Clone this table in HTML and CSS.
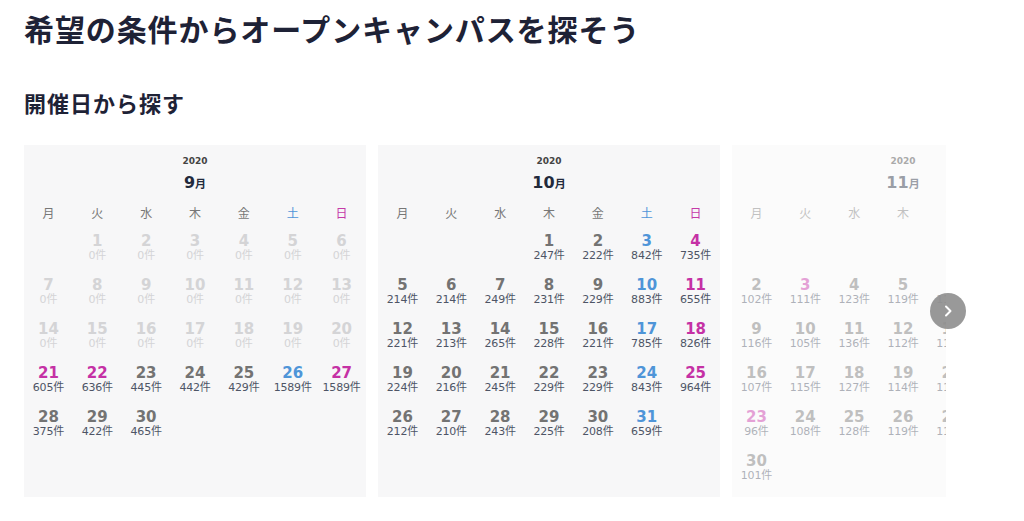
FILE: index.html
```html
<!DOCTYPE html>
<html lang="ja">
<head>
<meta charset="utf-8">
<link rel="stylesheet" href="styles.css">
</head>
<body>
<h1 class="title">希望の条件からオープンキャンパスを探そう</h1>
<h2 class="subtitle">開催日から探す</h2>
<div class="carousel">
  <div class="viewport">
    <div class="track">
      <section class="month">
        <div class="year">2020</div>
        <div class="mname"><span class="mnum">9</span>月</div>
        <div class="weekdays"><span>月</span><span>火</span><span>水</span><span>木</span><span>金</span><span class="sat">土</span><span class="sun">日</span></div>
        <div class="days">
          <div class="day empty"></div>
          <div class="day off"><b>1</b><i>0件</i></div>
          <div class="day off"><b>2</b><i>0件</i></div>
          <div class="day off"><b>3</b><i>0件</i></div>
          <div class="day off"><b>4</b><i>0件</i></div>
          <div class="day off"><b>5</b><i>0件</i></div>
          <div class="day off"><b>6</b><i>0件</i></div>
          <div class="day off"><b>7</b><i>0件</i></div>
          <div class="day off"><b>8</b><i>0件</i></div>
          <div class="day off"><b>9</b><i>0件</i></div>
          <div class="day off"><b>10</b><i>0件</i></div>
          <div class="day off"><b>11</b><i>0件</i></div>
          <div class="day off"><b>12</b><i>0件</i></div>
          <div class="day off"><b>13</b><i>0件</i></div>
          <div class="day off"><b>14</b><i>0件</i></div>
          <div class="day off"><b>15</b><i>0件</i></div>
          <div class="day off"><b>16</b><i>0件</i></div>
          <div class="day off"><b>17</b><i>0件</i></div>
          <div class="day off"><b>18</b><i>0件</i></div>
          <div class="day off"><b>19</b><i>0件</i></div>
          <div class="day off"><b>20</b><i>0件</i></div>
          <div class="day hol"><b>21</b><i>605件</i></div>
          <div class="day hol"><b>22</b><i>636件</i></div>
          <div class="day"><b>23</b><i>445件</i></div>
          <div class="day"><b>24</b><i>442件</i></div>
          <div class="day"><b>25</b><i>429件</i></div>
          <div class="day sat"><b>26</b><i>1589件</i></div>
          <div class="day sun"><b>27</b><i>1589件</i></div>
          <div class="day"><b>28</b><i>375件</i></div>
          <div class="day"><b>29</b><i>422件</i></div>
          <div class="day"><b>30</b><i>465件</i></div>
        </div>
      </section>
      <section class="month">
        <div class="year">2020</div>
        <div class="mname"><span class="mnum">10</span>月</div>
        <div class="weekdays"><span>月</span><span>火</span><span>水</span><span>木</span><span>金</span><span class="sat">土</span><span class="sun">日</span></div>
        <div class="days">
          <div class="day empty"></div>
          <div class="day empty"></div>
          <div class="day empty"></div>
          <div class="day"><b>1</b><i>247件</i></div>
          <div class="day"><b>2</b><i>222件</i></div>
          <div class="day sat"><b>3</b><i>842件</i></div>
          <div class="day sun"><b>4</b><i>735件</i></div>
          <div class="day"><b>5</b><i>214件</i></div>
          <div class="day"><b>6</b><i>214件</i></div>
          <div class="day"><b>7</b><i>249件</i></div>
          <div class="day"><b>8</b><i>231件</i></div>
          <div class="day"><b>9</b><i>229件</i></div>
          <div class="day sat"><b>10</b><i>883件</i></div>
          <div class="day sun"><b>11</b><i>655件</i></div>
          <div class="day"><b>12</b><i>221件</i></div>
          <div class="day"><b>13</b><i>213件</i></div>
          <div class="day"><b>14</b><i>265件</i></div>
          <div class="day"><b>15</b><i>228件</i></div>
          <div class="day"><b>16</b><i>221件</i></div>
          <div class="day sat"><b>17</b><i>785件</i></div>
          <div class="day sun"><b>18</b><i>826件</i></div>
          <div class="day"><b>19</b><i>224件</i></div>
          <div class="day"><b>20</b><i>216件</i></div>
          <div class="day"><b>21</b><i>245件</i></div>
          <div class="day"><b>22</b><i>229件</i></div>
          <div class="day"><b>23</b><i>229件</i></div>
          <div class="day sat"><b>24</b><i>843件</i></div>
          <div class="day sun"><b>25</b><i>964件</i></div>
          <div class="day"><b>26</b><i>212件</i></div>
          <div class="day"><b>27</b><i>210件</i></div>
          <div class="day"><b>28</b><i>243件</i></div>
          <div class="day"><b>29</b><i>225件</i></div>
          <div class="day"><b>30</b><i>208件</i></div>
          <div class="day sat"><b>31</b><i>659件</i></div>
        </div>
      </section>
      <section class="month faded">
        <div class="year">2020</div>
        <div class="mname"><span class="mnum">11</span>月</div>
        <div class="weekdays"><span>月</span><span>火</span><span>水</span><span>木</span><span>金</span><span class="sat">土</span><span class="sun">日</span></div>
        <div class="days">
          <div class="day empty"></div>
          <div class="day empty"></div>
          <div class="day empty"></div>
          <div class="day empty"></div>
          <div class="day empty"></div>
          <div class="day empty"></div>
          <div class="day sun"><b>1</b><i>98件</i></div>
          <div class="day"><b>2</b><i>102件</i></div>
          <div class="day hol"><b>3</b><i>111件</i></div>
          <div class="day"><b>4</b><i>123件</i></div>
          <div class="day"><b>5</b><i>119件</i></div>
          <div class="day"><b>6</b><i>112件</i></div>
          <div class="day sat"><b>7</b><i>530件</i></div>
          <div class="day sun"><b>8</b><i>410件</i></div>
          <div class="day"><b>9</b><i>116件</i></div>
          <div class="day"><b>10</b><i>105件</i></div>
          <div class="day"><b>11</b><i>136件</i></div>
          <div class="day"><b>12</b><i>112件</i></div>
          <div class="day"><b>13</b><i>115件</i></div>
          <div class="day sat"><b>14</b><i>420件</i></div>
          <div class="day sun"><b>15</b><i>380件</i></div>
          <div class="day"><b>16</b><i>107件</i></div>
          <div class="day"><b>17</b><i>115件</i></div>
          <div class="day"><b>18</b><i>127件</i></div>
          <div class="day"><b>19</b><i>114件</i></div>
          <div class="day"><b>20</b><i>113件</i></div>
          <div class="day sat"><b>21</b><i>402件</i></div>
          <div class="day sun"><b>22</b><i>366件</i></div>
          <div class="day hol"><b>23</b><i>96件</i></div>
          <div class="day"><b>24</b><i>108件</i></div>
          <div class="day"><b>25</b><i>128件</i></div>
          <div class="day"><b>26</b><i>119件</i></div>
          <div class="day"><b>27</b><i>115件</i></div>
          <div class="day sat"><b>28</b><i>398件</i></div>
          <div class="day sun"><b>29</b><i>350件</i></div>
          <div class="day"><b>30</b><i>101件</i></div>
        </div>
      </section>
    </div>
  </div>
  <button class="next" aria-label="次へ">
    <svg width="12" height="14" viewBox="0 0 12 14"><path d="M4 2.5 L8.5 7 L4 11.5" fill="none" stroke="#fff" stroke-width="2" stroke-linecap="round" stroke-linejoin="round"/></svg>
  </button>
</div>
</body>
</html>
```
FILE: styles.css
```css
* { box-sizing: border-box; }
html, body { margin: 0; padding: 0; background: #fff; }
body {
  padding-left: 24px;
  font-family: "Noto Sans CJK JP", "Noto Sans", sans-serif;
  color: #1f2336;
}
.title {
  margin: 0;
  padding-top: 9px;
  font-size: 30px;
  line-height: 38px;
  font-weight: 700;
  letter-spacing: 0.9px;
  color: #1e2236;
}
.subtitle {
  margin: 40px 0 0;
  font-size: 22px;
  line-height: 30px;
  font-weight: 700;
  letter-spacing: 1px;
  color: #1e2236;
}
.carousel {
  position: relative;
  margin-top: 28px;
  width: 922px;
}
.viewport {
  overflow: hidden;
  width: 922px;
}
.track {
  display: flex;
  gap: 12px;
}
.month {
  flex: 0 0 342px;
  height: 352px;
  background: #f7f7f8;
  padding-top: 9px;
  font-family: "DejaVu Sans", "Noto Sans CJK JP", sans-serif;
}
.month.faded { opacity: 0.45; }
.year {
  text-align: center;
  font-size: 9px;
  line-height: 14px;
  font-weight: 700;
  color: #444;
}
.mname {
  text-align: center;
  line-height: 26px;
  font-size: 11px;
  font-weight: 700;
  color: #222a3c;
  margin-top: 2px;
}
.mnum { font-size: 16px; }
.weekdays {
  display: grid;
  grid-template-columns: repeat(7, 1fr);
  margin-top: 0;
  line-height: 30px;
  font-family: "Noto Sans CJK JP", sans-serif;
  font-size: 12px;
  color: #777;
  text-align: center;
}
.weekdays .sat { color: #4f95d8; }
.weekdays .sun { color: #c53aa8; }
.days {
  display: grid;
  grid-template-columns: repeat(7, 1fr);
  grid-auto-rows: 44px;
}
.day {
  display: flex;
  flex-direction: column;
  align-items: center;
  padding-top: 5px;
}
.day b {
  font-size: 15px;
  line-height: 16px;
  font-weight: 700;
  color: #737373;
}
.day i {
  font-style: normal;
  font-size: 11px;
  line-height: 13px;
  letter-spacing: -0.2px;
  color: #4e5566;
  font-family: "DejaVu Sans", "Noto Sans CJK JP", sans-serif;
}
.day.sat b { color: #4f95d8; }
.day.sun b, .day.hol b { color: #c531a5; }
.day.off b { color: #d4d4d6; }
.day.off i { color: #d4d4d6; }
.next {
  position: absolute;
  left: 906px;
  top: 148px;
  width: 36px;
  height: 36px;
  border-radius: 50%;
  border: none;
  padding: 0;
  background: #8e8e8e;
  display: flex;
  align-items: center;
  justify-content: center;
  opacity: 0.9;
  cursor: pointer;
}
```
